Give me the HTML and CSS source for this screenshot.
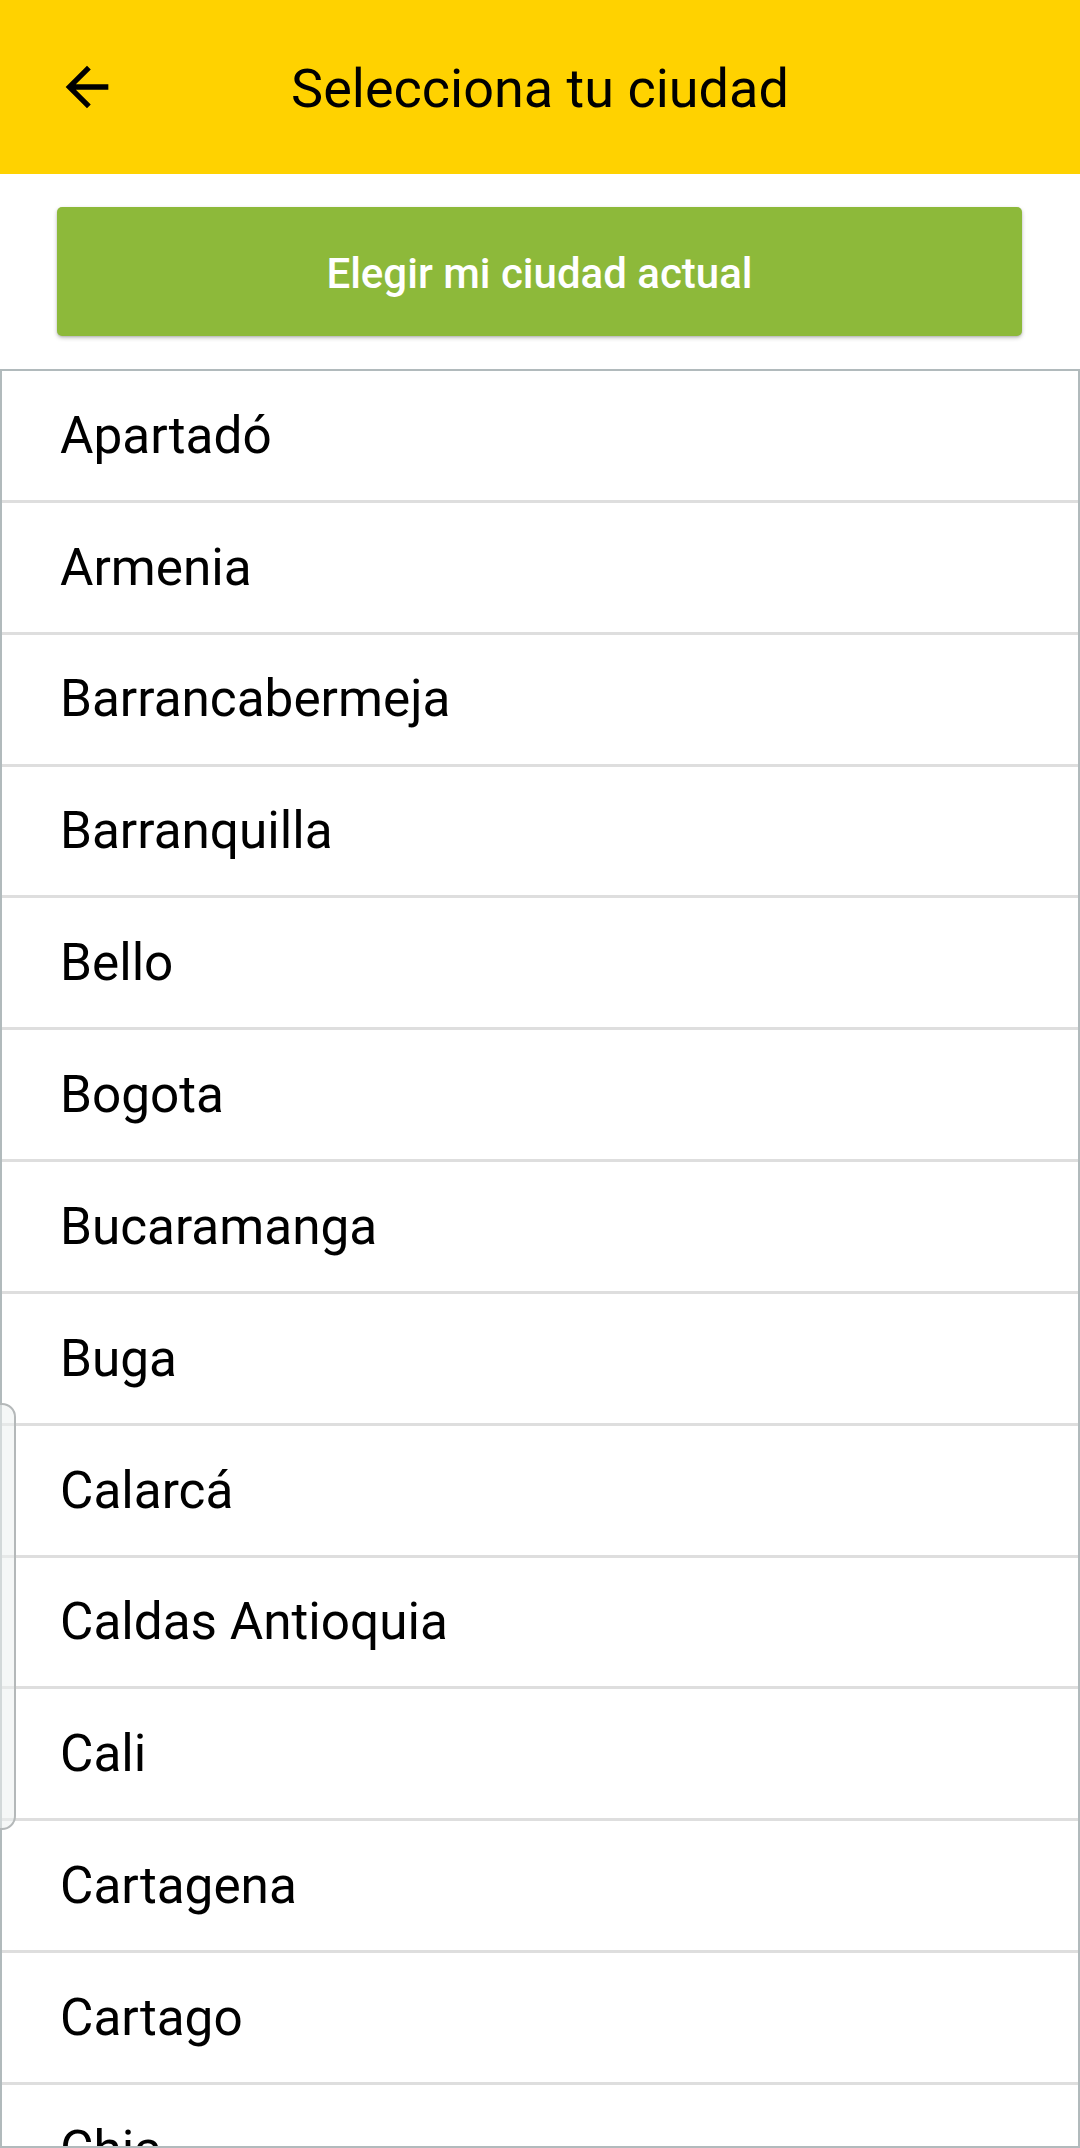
FILE: index.html
```html
<!DOCTYPE html>
<html lang="es">
<head>
<meta charset="utf-8">
<title>Selecciona tu ciudad</title>
<link rel="stylesheet" href="styles.css">
</head>
<body>
<div class="screen">
  <header class="appbar">
    <div class="appbar-left">
      <svg class="back-icon" viewBox="0 0 24 24" aria-hidden="true">
        <path d="M20 11H7.83l5.59-5.59L12 4l-8 8 8 8 1.41-1.41L7.83 13H20v-2z"/>
      </svg>
    </div>
    <h1 class="appbar-title">Selecciona tu ciudad</h1>
    <div class="appbar-right"></div>
  </header>

  <section class="action">
    <button class="current-btn" type="button">Elegir mi ciudad actual</button>
  </section>

  <ul class="city-list">
    <li class="city">Apartadó</li>
    <li class="city">Armenia</li>
    <li class="city">Barrancabermeja</li>
    <li class="city">Barranquilla</li>
    <li class="city">Bello</li>
    <li class="city">Bogota</li>
    <li class="city">Bucaramanga</li>
    <li class="city">Buga</li>
    <li class="city">Calarcá</li>
    <li class="city">Caldas Antioquia</li>
    <li class="city">Cali</li>
    <li class="city">Cartagena</li>
    <li class="city">Cartago</li>
    <li class="city city-partial">Chia</li>
  </ul>

  <div class="edge-handle"></div>
</div>
</body>
</html>
```

FILE: styles.css
```css
html, body {
  margin: 0;
  padding: 0;
  background: #ffffff;
}

body {
  font-family: Roboto, "Noto Sans", "Liberation Sans", sans-serif;
  color: #000000;
}

.screen {
  position: relative;
  width: 1080px;
  height: 2148px;
  overflow: hidden;
  display: flex;
  flex-direction: column;
}

.appbar {
  height: 174px;
  flex: 0 0 auto;
  background: #ffd200;
  display: grid;
  grid-template-columns: 1fr auto 1fr;
  align-items: center;
}

.appbar-left {
  display: flex;
  align-items: center;
  padding-left: 55px;
}

.back-icon {
  width: 64px;
  height: 64px;
  fill: #000000;
  display: block;
}

.appbar-title {
  margin: 0;
  padding-top: 4px;
  font-size: 54px;
  font-weight: 400;
  line-height: 1;
  letter-spacing: 0;
  white-space: nowrap;
}

.action {
  flex: 0 0 auto;
  padding: 33px 58px 33px 57px;
}

.current-btn {
  display: block;
  width: 100%;
  height: 129px;
  border: none;
  border-radius: 5px;
  background: #8db93a;
  color: #ffffff;
  font-family: Roboto, "Noto Sans", "Liberation Sans", sans-serif;
  font-size: 42px;
  font-weight: 500;
  box-shadow: 0 2px 4px rgba(0, 0, 0, 0.22), 0 1px 2px rgba(0, 0, 0, 0.12);
  padding: 4px 0 0 0;
}

.city-list {
  flex: 0 0 auto;
  height: 1779px;
  box-sizing: border-box;
  margin: 0;
  padding: 0;
  list-style: none;
  border: 2px solid #b1babc;
  overflow: hidden;
}

.city {
  height: 128.85px;
  border-bottom: 3px solid #dedede;
  display: flex;
  align-items: center;
  padding-left: 58px;
  font-size: 51.3px;
  font-weight: 400;
  line-height: 1;
}

.edge-handle {
  position: absolute;
  left: -16px;
  top: 1403px;
  width: 28px;
  height: 423px;
  border: 2px solid #b4b8b9;
  border-radius: 14px;
  background: rgba(236, 240, 240, 0.55);
}
```
